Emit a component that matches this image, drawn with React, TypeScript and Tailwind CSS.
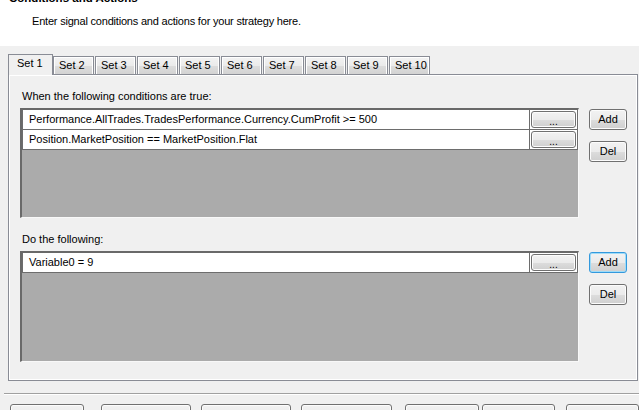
import React from "react";

const btn =
  "rounded-[3px] border border-[#707070] bg-[linear-gradient(#f2f2f2_0%,#ebebeb_50%,#dddddd_51%,#cfcfcf_100%)] shadow-[inset_0_0_0_1px_#fcfcfc] text-black flex items-center justify-center";

function WinButton({
  children,
  className,
  focused,
}: {
  children?: React.ReactNode;
  className: string;
  focused?: boolean;
}) {
  return (
    <div
      className={
        focused
          ? "rounded-[3px] border border-[#3399dd] bg-[linear-gradient(#f2f2f2_0%,#ebebeb_50%,#dddddd_51%,#cfcfcf_100%)] shadow-[inset_0_0_0_1px_#9fdcf8] text-black flex items-center justify-center " + className
          : btn + " " + className
      }
    >
      {children}
    </div>
  );
}

function Grid({ rows, heightClass }: { rows: string[]; heightClass: string }) {
  return (
    <div
      className={
        "w-[559px] border-t-2 border-l-2 border-t-[#696969] border-l-[#696969] border-r border-b border-r-[#f8f8f8] border-b-[#f8f8f8] bg-[#ababab] " +
        heightClass
      }
    >
      {rows.map((r, i) => (
        <div
          key={i}
          className="flex h-[20px] border-b border-l border-r border-[#6d6d6d] bg-white"
        >
          <div className="w-[507px] border-r border-[#6d6d6d] pl-[6px] leading-[19px] whitespace-nowrap overflow-hidden">
            {r}
          </div>
          <div className="flex-1 flex items-center justify-center">
            <WinButton className="w-[45px] h-[17px]">
              <span className="text-[10px] leading-[10px] pt-[4px]">...</span>
            </WinButton>
          </div>
        </div>
      ))}
    </div>
  );
}

export default function App() {
  const tabs = ["Set 2", "Set 3", "Set 4", "Set 5", "Set 6", "Set 7", "Set 8", "Set 9", "Set 10"];
  return (
    <div className="w-[639px] h-[410px] overflow-hidden bg-[#f0f0f0] font-['Liberation_Sans',Arial,sans-serif] text-[11px] text-black">
      {/* header */}
      <div className="h-[46px] bg-white overflow-hidden">
        <div className="-mt-[8px] pl-[9px] leading-[13px] text-[11.5px] font-bold">
          Conditions and Actions
        </div>
        <div className="mt-[10px] pl-[32px] leading-[13px] tracking-[-0.2px]">
          Enter signal conditions and actions for your strategy here.
        </div>
      </div>

      {/* tabs */}
      <div className="pl-[8px] pt-[8px]">
        <div className="flex items-end h-[20px]">
          <div className="relative z-10 -mb-px w-[45px] h-[21px] border-t border-l border-r border-[#898c95] bg-[#f0f0f0] pl-[8px] leading-[16px]">
            Set 1
          </div>
          {tabs.map((t, i) => (
            <div
              key={t}
              className={
                (i === 0 ? "ml-[0px] " : "ml-[1px] ") +
                "w-[41px] h-[18px] border-t border-l border-r border-[#898c95] bg-[linear-gradient(#f3f3f3_0%,#ebebeb_50%,#dddddd_51%,#d3d3d3_100%)] shadow-[inset_1px_1px_0_#fff,inset_-1px_0_0_#fff] pl-[5px] leading-[16px] whitespace-nowrap"
              }
            >
              {t}
            </div>
          ))}
        </div>

        {/* panel */}
        <div className="w-[630px] h-[307px] border border-[#898c95] bg-[#f0f0f0] shadow-[inset_1px_1px_0_#fff,inset_-1px_-1px_0_#fff] pl-[11px]">
          <div className="mt-[15px] ml-[2px] leading-[13px]">When the following conditions are true:</div>
          <div className="mt-[5px] flex">
            <Grid
              heightClass="h-[110px]"
              rows={[
                "Performance.AllTrades.TradesPerformance.Currency.CumProfit >= 500",
                "Position.MarketPosition == MarketPosition.Flat",
              ]}
            />
            <div className="ml-[10px] pt-[1px] flex flex-col gap-[11px]">
              <WinButton className="w-[38px] h-[21px]">Add</WinButton>
              <WinButton className="w-[38px] h-[21px]">Del</WinButton>
            </div>
          </div>

          <div className="mt-[15px] ml-[2px] leading-[13px]">Do the following:</div>
          <div className="mt-[5px] flex">
            <Grid heightClass="h-[111px]" rows={["Variable0 = 9"]} />
            <div className="ml-[10px] pt-[1px] flex flex-col gap-[11px]">
              <WinButton focused className="w-[38px] h-[21px]">Add</WinButton>
              <WinButton className="w-[38px] h-[21px]">Del</WinButton>
            </div>
          </div>
        </div>
      </div>

      {/* separator */}
      <div className="mt-[12px] ml-[4px] h-px bg-[#a0a0a0]" />
      <div className="ml-[4px] h-px bg-white" />

      {/* bottom buttons */}
      <div className="mt-[9px] pl-[10px] flex">
        <WinButton className="w-[74px] h-[23px]" />
        <WinButton className="ml-[17px] w-[90px] h-[23px]" />
        <WinButton className="ml-[10px] w-[90px] h-[23px]" />
        <WinButton className="ml-[10px] w-[91px] h-[23px]" />
        <WinButton className="ml-[13px] w-[74px] h-[23px]" />
        <WinButton className="ml-[3px] w-[73px] h-[23px]" />
        <WinButton className="ml-[11px] w-[73px] h-[23px]" />
      </div>
    </div>
  );
}
